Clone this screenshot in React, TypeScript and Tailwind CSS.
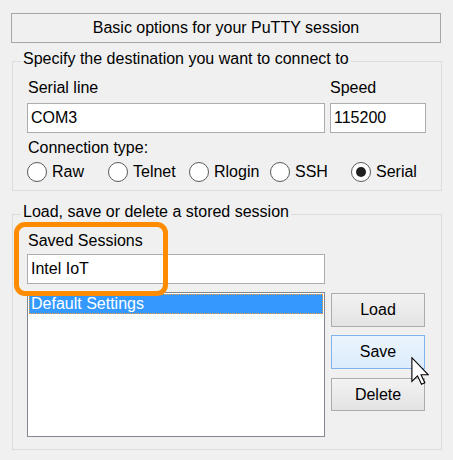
import React from "react";

function Radio({ label, checked }: { label: string; checked?: boolean }) {
  return (
    <div className="w-[81px] flex items-center h-[20px]">
      <div className="w-[20px] h-[20px] rounded-full border border-[#5a5a5a] bg-white flex items-center justify-center shrink-0">
        {checked && <div className="w-[10px] h-[10px] rounded-full bg-[#1f1f1f]" />}
      </div>
      <span className="ml-[5px]">{label}</span>
    </div>
  );
}

function Button({ label, hover, className }: { label: string; hover?: boolean; className?: string }) {
  return (
    <div
      className={
        "w-[94px] flex items-center justify-center border " +
        (hover
          ? "border-[#7eb4ea] bg-gradient-to-b from-[#ecf4fc] to-[#dcecfc] "
          : "border-[#adadad] bg-gradient-to-b from-[#f2f2f2] to-[#e3e3e3] ") +
        (className ?? "")
      }
    >
      {label}
    </div>
  );
}

export default function App() {
  return (
    <div className="relative w-[453px] h-[460px] bg-[#f0f0f0] pl-[11px] pt-[13px] font-['Liberation_Sans',Arial,sans-serif] text-[16px] leading-[18px] text-black">
      <div className="w-[430px] h-[30px] border border-[#a5a5a5] flex items-center justify-center">
        Basic options for your PuTTY session
      </div>

      <fieldset className="mt-[7px] ml-[1px] w-[430px] border border-[#dcdcdc] m-0 p-0 pl-[14px] pb-[8px]">
        <legend className="ml-[-6px] px-[2px] pb-[4px] leading-[18px]">Specify the destination you want to connect to</legend>
        <div className="mt-[7px] flex gap-[5px]">
          <div className="w-[298px]">
            <div className="pl-[1px]">Serial line</div>
            <div className="mt-[6px] h-[30px] border border-[#abadb3] bg-white flex items-center pl-[3px]">COM3</div>
          </div>
          <div className="w-[96px]">
            <div>Speed</div>
            <div className="mt-[6px] h-[30px] border border-[#abadb3] bg-white flex items-center pl-[3px]">115200</div>
          </div>
        </div>
        <div className="mt-[6px] pl-[1px]">Connection type:</div>
        <div className="mt-[5px] flex">
          <Radio label="Raw" />
          <Radio label="Telnet" />
          <Radio label="Rlogin" />
          <Radio label="SSH" />
          <Radio label="Serial" checked />
        </div>
      </fieldset>

      <fieldset className="mt-[12px] ml-[1px] w-[430px] border border-[#dcdcdc] m-0 p-0 pl-[14px] pb-[12px]">
        <legend className="ml-[-6px] px-[2px] pb-[4px] leading-[18px]">Load, save or delete a stored session</legend>
        <div className="mt-[7px] pl-[1px]">Saved Sessions</div>
        <div className="mt-[4px] w-[298px] h-[30px] border border-[#abadb3] bg-white flex items-center pl-[3px]">Intel IoT</div>
        <div className="mt-[8px] flex gap-[6px]">
          <div className="w-[298px] h-[145px] border border-[#828790] bg-white p-[1px]">
            <div className="h-[20px] bg-[#3399ff] border border-dotted border-[#ff9a3c] text-white flex items-center pl-[1px]">
              Default Settings
            </div>
          </div>
          <div className="flex flex-col pt-[1px]">
            <Button label="Load" className="h-[34px]" />
            <Button label="Save" hover className="h-[34px] mt-[8px]" />
            <Button label="Delete" className="h-[33px] mt-[9px]" />
          </div>
        </div>
      </fieldset>

      <div className="absolute left-[14px] top-[222px] w-[154px] h-[74px] border-[5px] border-[#ff8c00] rounded-[11px]" />

      <svg className="absolute left-[411px] top-[357px]" width="18" height="28" viewBox="0 0 12 19">
        <path
          d="M0.5 0.5 L0.5 16.5 L4.3 12.8 L7 18.5 L9.3 17.4 L6.7 12 L11.5 12 Z"
          fill="white"
          stroke="black"
          strokeWidth="0.75"
          strokeLinejoin="miter"
        />
      </svg>
    </div>
  );
}
